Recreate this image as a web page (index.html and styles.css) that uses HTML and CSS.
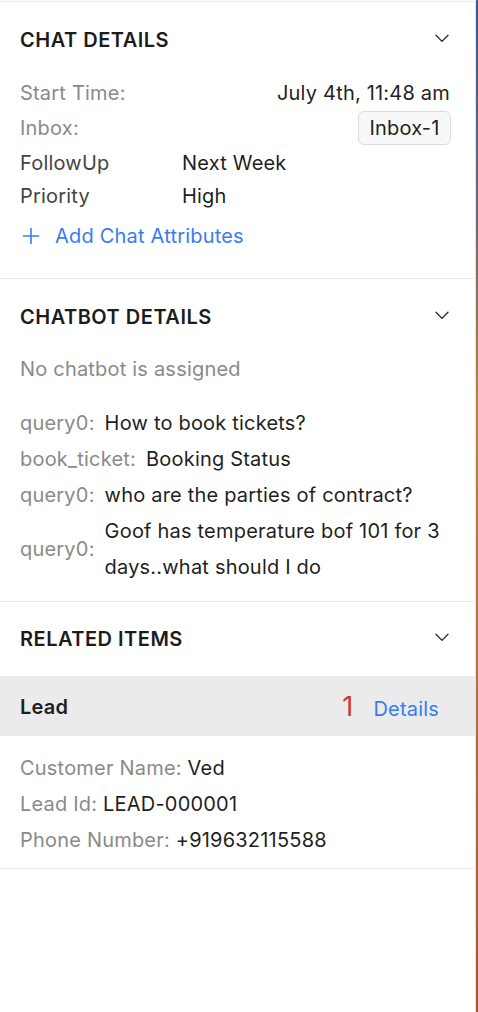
FILE: index.html
```html
<!DOCTYPE html>
<html>
<head>
<meta charset="utf-8">
<link rel="stylesheet" href="styles.css">
</head>
<body>
<div class="layout">
  <div class="panel">
    <section class="section s-chat">
      <div class="sec-head">
        <span class="sec-title">CHAT DETAILS</span>
        <svg class="chev" width="14" height="9" viewBox="0 0 14 9"><path d="M1 1.2 L7 7.4 L13 1.2" fill="none" stroke="#2a2a2a" stroke-width="1.3" stroke-linecap="round" stroke-linejoin="round"/></svg>
      </div>
      <div class="kv-rows">
        <div class="kv-row kv-split">
          <span class="label">Start Time:</span>
          <span class="value">July 4th, 11:48 am</span>
        </div>
        <div class="kv-row kv-split kv-inbox">
          <span class="label">Inbox:</span>
          <span class="badge">Inbox-1</span>
        </div>
        <div class="kv-row kv-grid">
          <span class="label-dark">FollowUp</span>
          <span class="value">Next Week</span>
        </div>
        <div class="kv-row kv-grid kv-last">
          <span class="label-dark">Priority</span>
          <span class="value">High</span>
        </div>
      </div>
      <div class="add-attr">
        <svg class="plus" width="18" height="18" viewBox="0 0 18 18"><path d="M9 1.5 V16.5 M1.5 9 H16.5" stroke="#3a7bf0" stroke-width="1.6" stroke-linecap="round"/></svg>
        <span>Add Chat Attributes</span>
      </div>
    </section>

    <section class="section s-bot">
      <div class="sec-head">
        <span class="sec-title">CHATBOT DETAILS</span>
        <svg class="chev" width="14" height="9" viewBox="0 0 14 9"><path d="M1 1.2 L7 7.4 L13 1.2" fill="none" stroke="#2a2a2a" stroke-width="1.3" stroke-linecap="round" stroke-linejoin="round"/></svg>
      </div>
      <div class="muted-line">No chatbot is assigned</div>
      <div class="qa-list">
        <div class="qa"><span class="label">query0:</span><span class="value">How to book tickets?</span></div>
        <div class="qa"><span class="label">book_ticket:</span><span class="value">Booking Status</span></div>
        <div class="qa"><span class="label">query0:</span><span class="value">who are the parties of contract?</span></div>
        <div class="qa"><span class="label">query0:</span><span class="value">Goof has temperature bof 101 for 3 days..what should I do</span></div>
      </div>
    </section>

    <section class="section s-related">
      <div class="sec-head">
        <span class="sec-title">RELATED ITEMS</span>
        <svg class="chev" width="14" height="9" viewBox="0 0 14 9"><path d="M1 1.2 L7 7.4 L13 1.2" fill="none" stroke="#2a2a2a" stroke-width="1.3" stroke-linecap="round" stroke-linejoin="round"/></svg>
      </div>
      <div class="lead-bar">
        <span class="lead-title">Lead</span>
        <div class="lead-actions">
          <span class="lead-count">1</span>
          <span class="lead-link">Details</span>
        </div>
      </div>
      <div class="lead-fields">
        <div class="lf"><span class="label">Customer Name:</span> <span class="value">Ved</span></div>
        <div class="lf"><span class="label">Lead Id:</span> <span class="value">LEAD-000001</span></div>
        <div class="lf"><span class="label">Phone Number:</span> <span class="value">+919632115588</span></div>
      </div>
    </section>
  </div>
  <div class="edge"></div>
</div>
</body>
</html>
```

FILE: styles.css
```css
* { box-sizing: border-box; }
html, body { margin: 0; padding: 0; background: #fff; }
body {
  font-family: Inter, "Liberation Sans", Arial, sans-serif;
  font-size: 20px;
  letter-spacing: 0.2px;
  color: #1f1f1f;
}
.layout {
  display: flex;
  width: 478px;
  height: 1012px;
}
.panel {
  width: 476px;
  flex: 0 0 476px;
  border-right: 1px solid #e4e4e4;
  border-top: 1px solid #ececec;
  margin-top: 1px;
}
.edge {
  flex: 0 0 2px;
  background: linear-gradient(to bottom, #3b5c92 0%, #6e6878 22%, #b08a3a 40%, #b2763a 65%, #a9552c 100%);
}
.section {
  border-bottom: 1px solid #e8e8e8;
  padding: 0 25px 0 20px;
}
.sec-head {
  display: flex;
  justify-content: space-between;
  align-items: center;
  padding-top: 24px;
  height: 52px;
  line-height: 28px;
}
.sec-title {
  font-weight: 600;
  font-size: 20px;
  letter-spacing: 0.5px;
  color: #1c1c1c;
}
.chev { display: block; margin-bottom: 4px; margin-right: 1px; }

.label { color: #8a8a8a; }
.label-dark { color: #444; }
.value { color: #1f1f1f; }

.s-chat { padding-bottom: 26px; }
.kv-rows { margin-top: 22px; display: flex; flex-direction: column; }
.kv-row { height: 34px; display: flex; align-items: center; }
.kv-inbox { height: 36px; }
.kv-last { height: 32px; }
.kv-split { justify-content: space-between; }
.kv-grid { display: grid; grid-template-columns: 162px 1fr; align-items: center; }
.badge {
  display: inline-flex;
  align-items: center;
  justify-content: center;
  height: 34px;
  width: 93px;
  border: 1px solid #dcdcdc;
  border-radius: 6px;
  background: #f8f8f8;
  color: #1f1f1f;
  margin-right: -1px;
}
.add-attr {
  margin-top: 8px;
  height: 32px;
  display: flex;
  align-items: center;
  gap: 15px;
  color: #3a7bf0;
  padding-left: 2px;
}
.plus { display: block; }

.s-bot { padding-bottom: 16px; }
.muted-line {
  margin-top: 22px;
  line-height: 32px;
  color: #8a8a8a;
}
.qa-list { margin-top: 20px; display: flex; flex-direction: column; }
.qa {
  display: flex;
  align-items: center;
  gap: 10px;
  line-height: 36px;
}
.qa .value { flex: 1; }

.s-related { padding: 0 0 10px 0; }
.s-related .sec-head { padding: 23px 25px 0 20px; height: 51px; }
.lead-bar {
  margin-top: 23px;
  height: 60px;
  background: #ebebeb;
  display: flex;
  justify-content: space-between;
  align-items: center;
  padding: 2px 36px 0 20px;
}
.lead-title { font-weight: 600; font-size: 20px; color: #1f1f1f; }
.lead-actions { display: flex; align-items: baseline; gap: 20px; }
.lead-count { color: #d0342c; font-size: 27px; font-weight: 400; line-height: 1; }
.lead-link { color: #3a7bf0; }
.lead-fields { padding: 14px 20px 0 20px; }
.lf { line-height: 36px; }
```
